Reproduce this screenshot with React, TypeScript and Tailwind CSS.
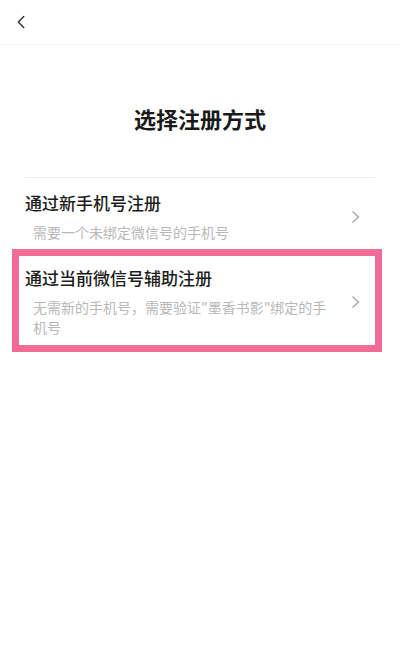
import { ChevronLeft } from 'lucide-react';

const font = { fontFamily: '"Noto Sans CJK SC", "Noto Sans", sans-serif' };

function Arrow() {
  return (
    <svg width="9" height="14" viewBox="0 0 9 14" className="shrink-0">
      <path d="M1.5 1.5 L7.5 7 L1.5 12.5" fill="none" stroke="#a8a8a8" strokeWidth="1.4" />
    </svg>
  );
}

interface OptionProps {
  title: string;
  desc: string;
}

function Option({ title, desc }: OptionProps) {
  return (
    <div className="flex items-center">
      <div className="flex-1 min-w-0">
        <div className="text-[17px] leading-[24px] font-medium text-[#1c1c1c]">{title}</div>
        <div className="mt-[7px] pl-2 pr-[20px] text-[14px] leading-[20px] text-[#b8b8b8]">{desc}</div>
      </div>
      <Arrow />
    </div>
  );
}

export default function App() {
  return (
    <div className="w-[400px] h-[656px] bg-white overflow-hidden" style={font}>
      <div className="h-[45px] flex items-center px-[10px] border-b border-[#f4f4f4]">
        <ChevronLeft size={22} strokeWidth={1.6} className="text-[#333]" />
      </div>

      <h1 className="mt-[58px] text-center text-[22px] leading-[30px] font-bold text-[#1a1a1a]">
        选择注册方式
      </h1>

      <div className="mt-[44px] mx-[25px] h-px bg-[#ebebeb]" />

      <div className="pt-[13px] pb-[7px] pl-[25px] pr-[40px]">
        <Option title="通过新手机号注册" desc="需要一个未绑定微信号的手机号" />
      </div>

      <div className="ml-[12px] mr-[18px] border-[7px] border-[#f06c96] pt-[10px] pb-[8px] pl-[6px] pr-[15px]">
        <Option title="通过当前微信号辅助注册" desc={'无需新的手机号，需要验证"墨香书影"绑定的手机号'} />
      </div>
    </div>
  );
}
